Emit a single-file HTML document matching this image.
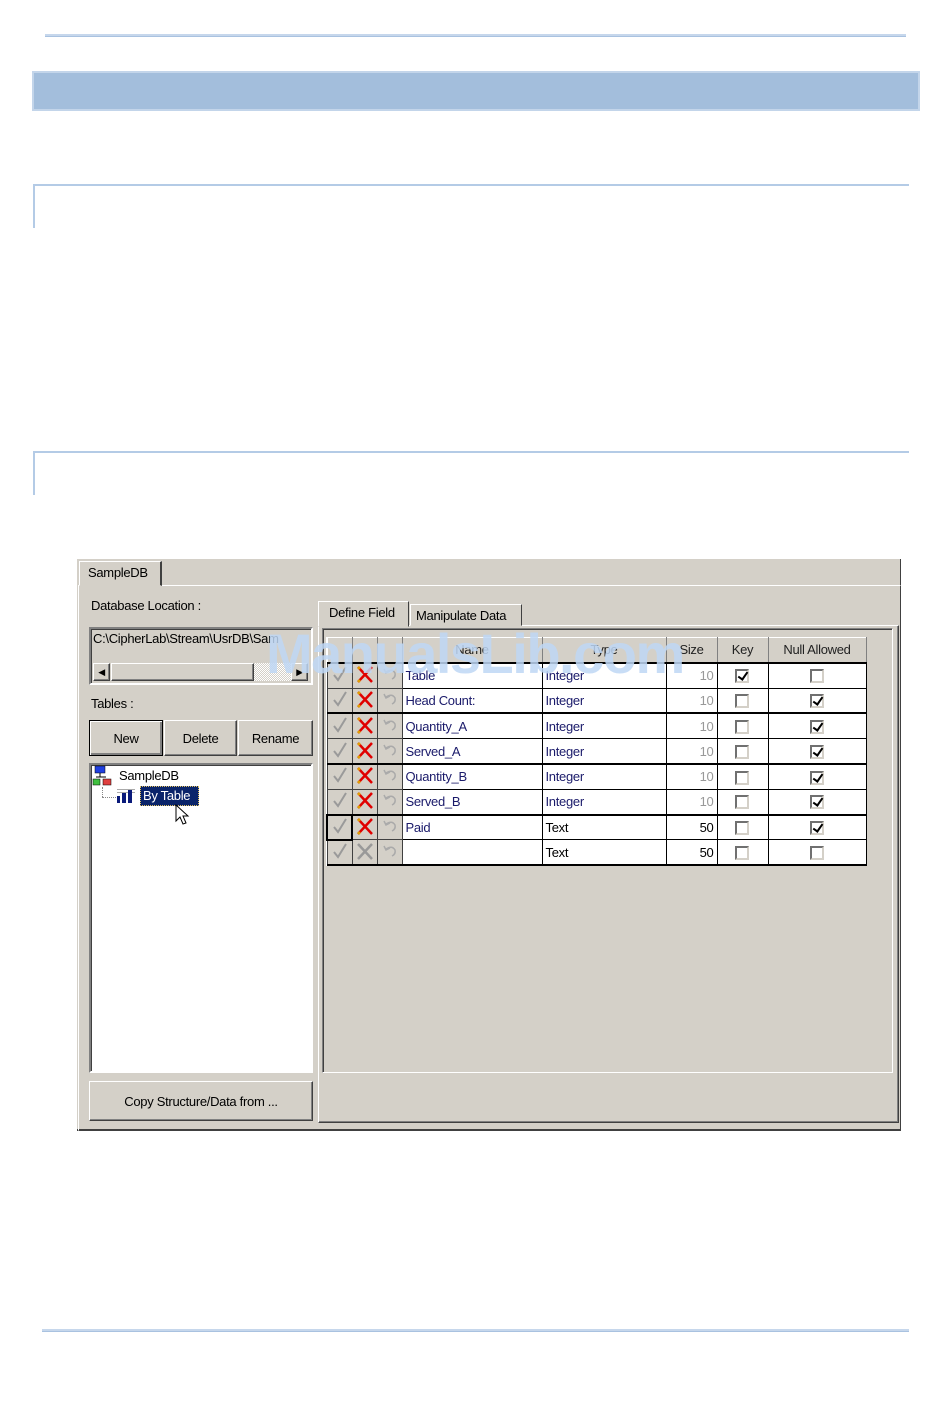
<!DOCTYPE html>
<html><head><meta charset="utf-8"><style>
*{margin:0;padding:0;box-sizing:border-box}
body{width:950px;height:1420px;background:#fff;position:relative;font-family:"Liberation Sans",sans-serif;overflow:hidden}
.a{position:absolute}
.w{font-size:13px;color:#000;letter-spacing:-0.3px}
.btn{position:absolute;background:#d4d0c8;border:1px solid;border-color:#fff #404040 #404040 #fff;box-shadow:inset -1px -1px 0 #808080;display:flex;align-items:center;justify-content:center;font-size:13px;letter-spacing:-0.3px}
.sunk{border:2px solid;border-color:#808080 #fff #fff #808080;box-shadow:inset 1px 1px 0 #404040}
table{border-collapse:collapse;position:absolute;left:326px;top:637px;background:#fff}
td{height:25.3px;border:1px solid #000;font-size:13px;letter-spacing:-0.3px;padding:0 3px;color:#1a1a6a;white-space:nowrap}
td.b{background:#d4d0c8;padding:0;width:25px;text-align:center;border-color:#404040}
tr.h td{background:#d4d0c8;color:#222;text-align:center;border-color:#fff #808080 #000 #fff}
tr.t td{border-top:2px solid #000}
.cb{display:inline-block;width:14px;height:14px;border:2px solid;border-color:#707070 #d4d0c8 #d4d0c8 #707070;background:#fff;vertical-align:middle;position:relative}
.cb.c::after{content:"";position:absolute;left:3px;top:-1px;width:4px;height:8px;border:solid #000;border-width:0 2px 2px 0;transform:rotate(35deg)}
</style></head><body>
<div class="a" style="left:45px;top:34px;width:861px;height:3px;background:#c6d7ec;border-bottom:1px solid #a9c2e0"></div>
<div class="a" style="left:32px;top:71px;width:888px;height:40px;background:#a3bedc;border:2px solid #c3d5ea"></div>
<div class="a" style="left:33px;top:184px;width:876px;height:2px;background:#b4cbe6"></div>
<div class="a" style="left:33px;top:184px;width:2px;height:44px;background:#b4cbe6"></div>
<div class="a" style="left:33px;top:451px;width:876px;height:2px;background:#b4cbe6"></div>
<div class="a" style="left:33px;top:451px;width:2px;height:44px;background:#b4cbe6"></div>
<div class="a" style="left:42px;top:1329px;width:867px;height:3px;background:#c6d7ec;border-bottom:1px solid #a9c2e0"></div>

<div class="a" style="left:77px;top:559px;width:824px;height:572px;background:#d4d0c8;border-bottom:2px solid #404040;border-right:1px solid #404040"></div>
<div class="a" style="left:78px;top:585px;width:823px;height:546px;border:1px solid;border-color:#fff #404040 #404040 #fff"></div>
<div class="a w" style="left:79px;top:561px;width:83px;height:25px;background:#d4d0c8;border:1px solid;border-color:#fff #404040 #d4d0c8 #fff;border-right-width:2px;padding:3px 0 0 8px">SampleDB</div>
<div class="a w" style="left:91px;top:598px">Database Location :</div>
<div class="a sunk" style="left:89px;top:627px;width:224px;height:58px;background:#d4d0c8"></div>
<div class="a w" style="left:93px;top:631px;width:216px;overflow:hidden;white-space:nowrap">C:\CipherLab\Stream\UsrDB\Sam</div>
<div class="a" style="left:92px;top:662px;width:218px;height:20px;background:#d4d0c8"></div>
<div class="btn" style="left:93px;top:663px;width:17px;height:18px;font-size:9px">◀</div>
<div class="btn" style="left:111px;top:663px;width:143px;height:18px"></div>
<div class="a" style="left:254px;top:663px;width:37px;height:18px;background:repeating-conic-gradient(#fff 0 25%,#d4d0c8 0 50%) 0 0/2px 2px"></div>
<div class="btn" style="left:291px;top:663px;width:17px;height:18px;font-size:9px">▶</div>
<div class="a w" style="left:91px;top:696px">Tables :</div>
<div class="btn" style="left:89px;top:720px;width:74px;height:36px;border-color:#000;box-shadow:inset 1px 1px 0 #fff,inset -2px -2px 0 #808080">New</div>
<div class="btn" style="left:164px;top:720px;width:73px;height:36px">Delete</div>
<div class="btn" style="left:238px;top:720px;width:75px;height:36px">Rename</div>
<div class="a sunk" style="left:89px;top:763px;width:224px;height:310px;background:#fff"></div>
<svg class="a" style="left:92px;top:765px" width="24" height="22"><rect x="3" y="1" width="10" height="7" fill="#2040e0" stroke="#000" stroke-width=".5"/><line x1="8" y1="8" x2="8" y2="12" stroke="#000"/><line x1="4" y1="12" x2="14" y2="12" stroke="#000"/><rect x="1" y="14" width="7" height="6" fill="#40c040" stroke="#000" stroke-width=".5"/><rect x="11" y="14" width="8" height="6" fill="#e04040" stroke="#000" stroke-width=".5"/></svg>
<div class="a w" style="left:119px;top:768px">SampleDB</div>
<div class="a" style="left:102px;top:787px;width:1px;height:10px;border-left:1px dotted #888"></div>
<div class="a" style="left:102px;top:797px;width:14px;border-top:1px dotted #888"></div>
<svg class="a" style="left:116px;top:788px" width="20" height="16"><rect x="1" y="1" width="18" height="1" fill="#aaa"/><rect x="1" y="4" width="18" height="1" fill="#aaa"/><rect x="1" y="8" width="3" height="7" fill="#0a1a7a"/><rect x="6" y="5" width="4" height="10" fill="#0a1a7a"/><rect x="12" y="2" width="4" height="13" fill="#0a1a7a"/></svg>
<div class="a" style="left:140px;top:786px;width:59px;height:20px;background:#0a246a;border:1px dotted #e0c060;color:#fff;font-size:13px;letter-spacing:-0.3px;padding:1px 0 0 2px">By Table</div>
<svg class="a" style="left:175px;top:804px" width="18" height="24"><path d="M1 1 L1 17 L5 13 L8 20 L11 19 L8 12 L13 12 Z" fill="#fff" stroke="#000"/></svg>
<div class="btn" style="left:89px;top:1081px;width:224px;height:40px">Copy Structure/Data from ...</div>

<div class="a" style="left:318px;top:625px;width:581px;height:498px;border:1px solid;border-color:#fff #404040 #404040 #fff;box-shadow:inset -1px -1px 0 #808080"></div>
<div class="a w" style="left:318px;top:601px;width:91px;height:26px;background:#d4d0c8;border:1px solid;border-color:#fff #404040 #d4d0c8 #fff;padding:3px 0 0 10px">Define Field</div>
<div class="a w" style="left:410px;top:604px;width:112px;height:22px;background:#d4d0c8;border:1px solid;border-color:#fff #404040 #d4d0c8 #fff;padding:3px 0 0 5px">Manipulate Data</div>
<div class="a" style="left:322px;top:628px;width:571px;height:445px;border:1px solid;border-color:#808080 #fff #fff #808080;box-shadow:inset 1px 1px 0 #404040"></div>

<svg width="0" height="0" style="position:absolute"><defs>
<symbol id="ck" viewBox="0 0 20 20"><path d="M4 11 L8 16 L16 3" fill="none" stroke="#9a9a9a" stroke-width="2"/></symbol>
<symbol id="x" viewBox="0 0 20 20"><path d="M3 3 L17 18 M17 3 L3 18" stroke="#e00000" stroke-width="2.5"/><circle cx="4" cy="4" r="1.5" fill="#e0a000"/><circle cx="4" cy="17" r="1.5" fill="#e0a000"/></symbol>
<symbol id="xg" viewBox="0 0 20 20"><path d="M3 3 L17 18 M17 3 L3 18" stroke="#999" stroke-width="2.5"/></symbol>
<symbol id="u" viewBox="0 0 20 20"><path d="M6 8 Q12 4 15 9 Q16 13 12 15 M4 5 L6 9 L10 7" fill="none" stroke="#aaa" stroke-width="1.5"/></symbol>
</defs></svg>

<table>
<tr class="h"><td class="b" style="width:25px"></td><td class="b" style="width:25px"></td><td class="b" style="width:25px"></td><td style="width:140px">Name</td><td style="width:124px">Type</td><td style="width:51px">Size</td><td style="width:51px">Key</td><td style="width:98px">Null Allowed</td></tr>
<tr class="t"><td class="b"><svg width="20" height="20"><use href="#ck"/></svg></td><td class="b"><svg width="20" height="20"><use href="#x"/></svg></td><td class="b"><svg width="20" height="20"><use href="#u"/></svg></td><td>Table</td><td>Integer</td><td style="text-align:right;color:#999">10</td><td style="padding-left:17px"><span class="cb c"></span></td><td style="text-align:center"><span class="cb"></span></td></tr>
<tr><td class="b"><svg width="20" height="20"><use href="#ck"/></svg></td><td class="b"><svg width="20" height="20"><use href="#x"/></svg></td><td class="b"><svg width="20" height="20"><use href="#u"/></svg></td><td>Head Count:</td><td>Integer</td><td style="text-align:right;color:#999">10</td><td style="padding-left:17px"><span class="cb"></span></td><td style="text-align:center"><span class="cb c"></span></td></tr>
<tr class="t"><td class="b"><svg width="20" height="20"><use href="#ck"/></svg></td><td class="b"><svg width="20" height="20"><use href="#x"/></svg></td><td class="b"><svg width="20" height="20"><use href="#u"/></svg></td><td>Quantity_A</td><td>Integer</td><td style="text-align:right;color:#999">10</td><td style="padding-left:17px"><span class="cb"></span></td><td style="text-align:center"><span class="cb c"></span></td></tr>
<tr><td class="b"><svg width="20" height="20"><use href="#ck"/></svg></td><td class="b"><svg width="20" height="20"><use href="#x"/></svg></td><td class="b"><svg width="20" height="20"><use href="#u"/></svg></td><td>Served_A</td><td>Integer</td><td style="text-align:right;color:#999">10</td><td style="padding-left:17px"><span class="cb"></span></td><td style="text-align:center"><span class="cb c"></span></td></tr>
<tr class="t"><td class="b"><svg width="20" height="20"><use href="#ck"/></svg></td><td class="b"><svg width="20" height="20"><use href="#x"/></svg></td><td class="b"><svg width="20" height="20"><use href="#u"/></svg></td><td>Quantity_B</td><td>Integer</td><td style="text-align:right;color:#999">10</td><td style="padding-left:17px"><span class="cb"></span></td><td style="text-align:center"><span class="cb c"></span></td></tr>
<tr><td class="b"><svg width="20" height="20"><use href="#ck"/></svg></td><td class="b"><svg width="20" height="20"><use href="#x"/></svg></td><td class="b"><svg width="20" height="20"><use href="#u"/></svg></td><td>Served_B</td><td>Integer</td><td style="text-align:right;color:#999">10</td><td style="padding-left:17px"><span class="cb"></span></td><td style="text-align:center"><span class="cb c"></span></td></tr>
<tr class="t"><td class="b" style="border:2px solid #000"><svg width="20" height="20"><use href="#ck"/></svg></td><td class="b"><svg width="20" height="20"><use href="#x"/></svg></td><td class="b"><svg width="20" height="20"><use href="#u"/></svg></td><td>Paid</td><td style="color:#000">Text</td><td style="text-align:right;color:#000">50</td><td style="padding-left:17px"><span class="cb"></span></td><td style="text-align:center"><span class="cb c"></span></td></tr>
<tr style="border-bottom:2px solid #000"><td class="b"><svg width="20" height="20"><use href="#ck"/></svg></td><td class="b"><svg width="20" height="20"><use href="#xg"/></svg></td><td class="b"><svg width="20" height="20"><use href="#u"/></svg></td><td></td><td style="color:#000">Text</td><td style="text-align:right;color:#000">50</td><td style="padding-left:17px"><span class="cb"></span></td><td style="text-align:center"><span class="cb"></span></td></tr>
</table>

<div class="a" style="left:266px;top:621px;font-size:56px;font-weight:bold;color:rgba(190,215,245,0.85);letter-spacing:-1.5px;white-space:nowrap">ManualsLib.com</div>
</body></html>
